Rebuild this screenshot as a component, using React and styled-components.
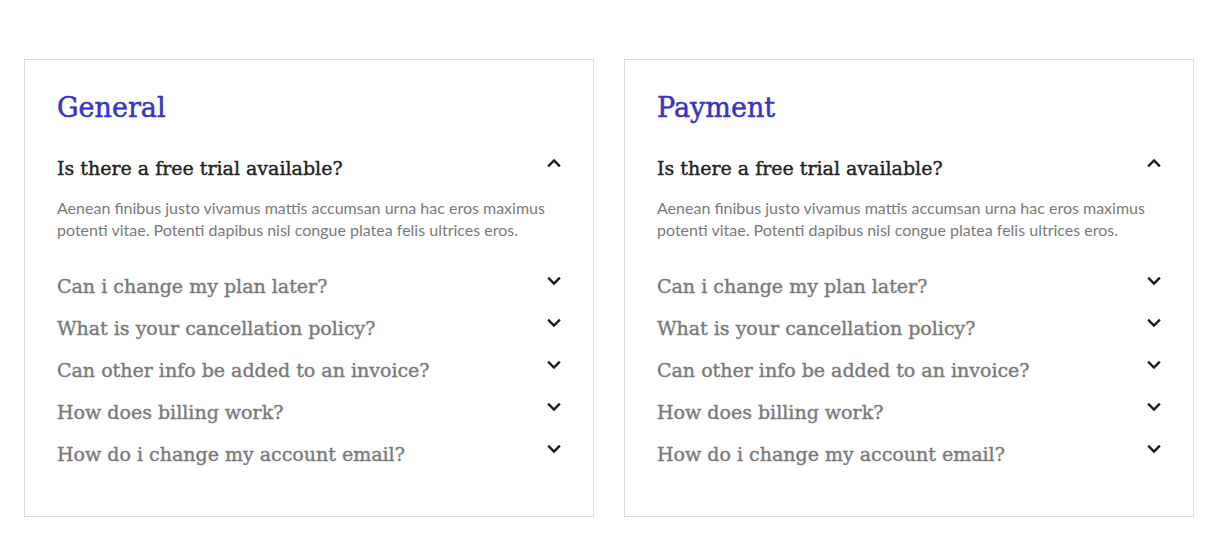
import React from "react";
import styled, { createGlobalStyle } from "styled-components";

const Global = createGlobalStyle`
  html, body { margin: 0; padding: 0; background: #fff; }
  body { font-family: "Lato", "Open Sans", sans-serif; }
`;

const Page = styled.div`
  display: flex;
  gap: 30px;
  padding: 59px 0 0 24px;
`;

const Card = styled.section`
  box-sizing: border-box;
  width: 570px;
  height: 458px;
  border: 1px solid #dedede;
  padding: 30px 32px 0 32px;
`;

const Title = styled.h2`
  margin: 0 0 21px;
  font-family: "DejaVu Serif", serif;
  font-weight: 400;
  font-size: 27px;
  line-height: 36px;
  color: #3733c4;
  -webkit-text-stroke: 0.5px currentColor;
`;

const Item = styled.div``;

const Row = styled.div`
  display: flex;
  justify-content: space-between;
  align-items: flex-start;
  padding: 7px 0;
  cursor: pointer;
`;

const Question = styled.span`
  font-family: "DejaVu Serif", serif;
  font-size: 19px;
  line-height: 28px;
  color: ${(p) => (p.$open ? "#222" : "#7a7a7a")};
  -webkit-text-stroke: 0.4px currentColor;
`;

const Chevron = styled.svg`
  flex: none;
  width: 14px;
  height: 14px;
  margin-top: 2px;
`;

const Answer = styled.p`
  margin: 0;
  padding: 8px 0 24px;
  font-family: "Lato", "Open Sans", sans-serif;
  font-size: 16px;
  line-height: 22px;
  color: #7a7a7a;
`;

const questions = [
  "Is there a free trial available?",
  "Can i change my plan later?",
  "What is your cancellation policy?",
  "Can other info be added to an invoice?",
  "How does billing work?",
  "How do i change my account email?",
];

const answer =
  "Aenean finibus justo vivamus mattis accumsan urna hac eros maximus potenti vitae. Potenti dapibus nisl congue platea felis ultrices eros.";

function Icon({ up }) {
  return (
    <Chevron viewBox="0 0 14 14">
      <path
        d={up ? "M2 9.5 L7 4.5 L12 9.5" : "M2 4.5 L7 9.5 L12 4.5"}
        fill="none"
        stroke="#1a1a1a"
        strokeWidth="2.4"
        strokeLinecap="square"
      />
    </Chevron>
  );
}

function FaqCard({ title }) {
  return (
    <Card>
      <Title>{title}</Title>
      {questions.map((q, i) => (
        <Item key={q}>
          <Row>
            <Question $open={i === 0}>{q}</Question>
            <Icon up={i === 0} />
          </Row>
          {i === 0 && <Answer>{answer}</Answer>}
        </Item>
      ))}
    </Card>
  );
}

export default function App() {
  return (
    <>
      <Global />
      <Page>
        <FaqCard title="General" />
        <FaqCard title="Payment" />
      </Page>
    </>
  );
}
